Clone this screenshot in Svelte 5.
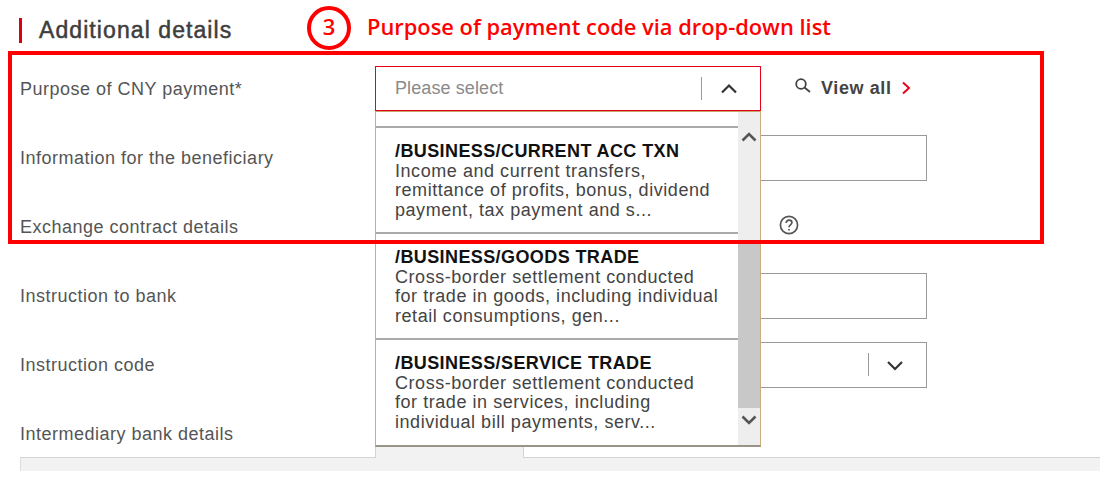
<script>
    const items = [
        {
            code: "/BUSINESS/CURRENT ACC TXN",
            lines: ["Income and current transfers,", "remittance of profits, bonus, dividend", "payment, tax payment and s..."]
        },
        {
            code: "/BUSINESS/GOODS TRADE",
            lines: ["Cross-border settlement conducted", "for trade in goods, including individual", "retail consumptions, gen..."]
        },
        {
            code: "/BUSINESS/SERVICE TRADE",
            lines: ["Cross-border settlement conducted", "for trade in services, including", "individual bill payments, serv..."]
        }
    ];
</script>

<div class="page">
    <header class="header">
        <h2 class="title">Additional details</h2>
        <span class="step">3</span>
        <span class="step-text">Purpose of payment code via drop-down list</span>
    </header>

    <div class="row">
        <span class="label">Purpose of CNY payment*</span>
        <div class="controls">
            <div class="select open">
                <span class="placeholder">Please select</span>
                <span class="sep"></span>
                <svg class="chevron" viewBox="0 0 18 11"><path d="M2 9.5 9 2.5l7 7" /></svg>
            </div>
            <div class="view-all">
                <svg class="search" viewBox="0 0 16 16"><circle cx="6" cy="6" r="4.800" /><path d="m9.500 9.500 5.500 4.500" /></svg>
                <span>View all</span>
                <svg class="more" viewBox="0 0 10 14"><path d="M2 1.500 8 7l-6 5.500" /></svg>
            </div>
        </div>
    </div>
    <div class="row">
        <span class="label">Information for the beneficiary</span>
        <div class="controls"><div class="input"></div></div>
    </div>
    <div class="row">
        <span class="label">Exchange contract details</span>
        <div class="controls help-row">
            <svg class="help" viewBox="0 0 20 20">
                <circle cx="10" cy="10" r="8.600" />
                <path d="M7.200 8c0-1.800 1.200-2.800 2.900-2.800 1.600 0 2.800 1 2.800 2.400 0 2.300-2.900 2.200-2.900 4.600" />
                <path d="M10 14v1.600" />
            </svg>
        </div>
    </div>
    <div class="row">
        <span class="label">Instruction to bank</span>
        <div class="controls"><div class="input"></div></div>
    </div>
    <div class="row">
        <span class="label">Instruction code</span>
        <div class="controls">
            <div class="input code">
                <span class="sep"></span>
                <svg class="chevron" viewBox="0 0 18 11"><path d="M2 2l7 7 7-7" /></svg>
            </div>
        </div>
    </div>
    <div class="row">
        <span class="label">Intermediary bank details</span>
    </div>

    <div class="tabs">
        <div class="tab"></div>
    </div>

    <div class="dropdown">
        <ul class="list">
            {#each items as item}
                <li class="item">
                    <strong>{item.code}</strong>
                    {#each item.lines as line}
                        <span>{line}</span>
                    {/each}
                </li>
            {/each}
        </ul>
        <div class="scrollbar">
            <svg class="arrow" viewBox="0 0 16 10"><path d="M1.500 8.500 8 2l6.500 6.500" /></svg>
            <div class="thumb"></div>
            <svg class="arrow" viewBox="0 0 16 10"><path d="M1.500 1.500 8 8l6.500-6.500" /></svg>
        </div>
    </div>

    <div class="highlight"></div>
    <span class="step-ring"></span>
</div>

<style>
    :global(body) {
        margin: 0;
        background: #fff;
    }

    .page {
        position: relative;
        width: 1111px;
        height: 486px;
        overflow: hidden;
        font-family: "Liberation Sans", Arial, sans-serif;
        color: #555;
    }

    .header {
        display: flex;
        align-items: center;
        height: 54px;
        padding-left: 19px;
        box-sizing: border-box;
    }

    .title {
        margin: 7px 0 0;
        width: 288px;
        height: 25px;
        box-sizing: border-box;
        border-left: 3px solid #db0011;
        padding-left: 17px;
        font-size: 23px;
        font-weight: 400;
        letter-spacing: 1.080px;
        line-height: 25px;
        white-space: nowrap;
        color: #3e3e3e;
        -webkit-text-stroke: 0.5px #3e3e3e;
    }

    .step {
        width: 44px;
        margin-top: -2px;
        text-align: center;
        font-family: "Open Sans", sans-serif;
        font-size: 22px;
        font-weight: 600;
        color: #f00;
    }

    .step-text {
        margin: -2px 0 0 16px;
        font-family: "Open Sans", sans-serif;
        font-size: 21.850px;
        font-weight: 600;
        color: #f00;
    }

    .step-ring {
        position: absolute;
        left: 307px;
        top: 6px;
        width: 44px;
        height: 44px;
        box-sizing: border-box;
        border: 4px solid #f00;
        border-radius: 50%;
    }

    .row {
        display: flex;
        align-items: center;
        height: 69px;
        padding-left: 20px;
    }

    .label {
        width: 355px;
        flex: none;
        margin-top: 1px;
        font-size: 18px;
        letter-spacing: 0.500px;
        white-space: nowrap;
        color: #555;
    }

    .controls {
        display: flex;
        align-items: center;
    }

    .select {
        display: flex;
        align-items: center;
        width: 386px;
        height: 45px;
        box-sizing: border-box;
        border: 1px solid #e8001c;
        padding-left: 19px;
    }

    .placeholder {
        flex: 1;
        margin-top: -1px;
        font-size: 18px;
        letter-spacing: 0.100px;
        color: #8a8a8a;
    }

    .sep {
        width: 1px;
        height: 23px;
        background: #999;
    }

    .chevron {
        width: 18px;
        height: 11px;
        margin: 0 22px 0 18px;
        fill: none;
        stroke: #333;
        stroke-width: 2.200;
    }

    .view-all {
        display: flex;
        align-items: center;
        margin-left: 34px;
        font-size: 18px;
        font-weight: 700;
        letter-spacing: 0.600px;
        color: #444;
    }

    .search {
        width: 16px;
        height: 16px;
        margin: -6px 10px 0 0;
        fill: none;
        stroke: #444;
        stroke-width: 1.800;
    }

    .more {
        width: 10px;
        height: 14px;
        margin: -2px 0 0 9px;
        fill: none;
        stroke: #e8001c;
        stroke-width: 2;
    }

    .input {
        display: flex;
        align-items: center;
        justify-content: flex-end;
        width: 552px;
        height: 46px;
        margin-top: 1px;
        box-sizing: border-box;
        border: 1px solid #999;
    }

    .code .sep {
        margin-top: -2px;
    }

    .code .chevron {
        margin-left: 17px;
    }

    .help-row {
        padding-left: 404px;
        margin-top: -4px;
    }

    .help {
        width: 20px;
        height: 20px;
        fill: none;
        stroke: #555;
        stroke-width: 1.700;
    }

    .tabs {
        display: flex;
        height: 13px;
        margin: -11px 11px 0 20px;
        border-top: 1px solid #d4d4d4;
        border-left: 1px solid #ddd;
        background: #f2f2f2;
    }

    .tab {
        width: 149px;
        height: 28px;
        margin: -28px 0 0 354px;
        box-sizing: border-box;
        border-left: 1px solid #d4d4d4;
        border-right: 1px solid #d4d4d4;
        background: #f2f2f2;
    }

    .dropdown {
        position: absolute;
        left: 375px;
        top: 111px;
        display: flex;
        width: 386px;
        height: 336px;
        box-sizing: border-box;
        border: 1px solid #c9ad7c;
        border-bottom: 2px solid #9a9488;
        border-top-color: #c4a468;
        background: #fff;
    }

    .list {
        flex: 1;
        margin: 0;
        padding: 14px 0 0;
        list-style: none;
    }

    .item {
        display: flex;
        flex-direction: column;
        height: 106px;
        box-sizing: border-box;
        padding: 14px 0 0 19px;
        border-top: 2px solid #aaa;
        font-size: 18px;
        letter-spacing: 0.550px;
        line-height: 19.500px;
        white-space: nowrap;
        color: #444;
    }

    .item strong {
        font-size: 18px;
        letter-spacing: 0.400px;
        color: #111;
    }

    .scrollbar {
        display: flex;
        flex-direction: column;
        align-items: center;
        width: 22px;
        background: #eee;
    }

    .arrow {
        width: 16px;
        height: 10px;
        margin: 20px 0 10px;
        flex: none;
        fill: none;
        stroke: #555;
        stroke-width: 2.600;
    }

    .thumb {
        width: 100%;
        flex: 1;
        margin-top: 88px;
        background: #c8c8c8;
    }

    .thumb + .arrow {
        margin: 7px 0 20px;
    }

    .highlight {
        position: absolute;
        left: 8px;
        top: 51px;
        width: 1036px;
        height: 193px;
        box-sizing: border-box;
        border: 4px solid #f00;
    }
</style>
